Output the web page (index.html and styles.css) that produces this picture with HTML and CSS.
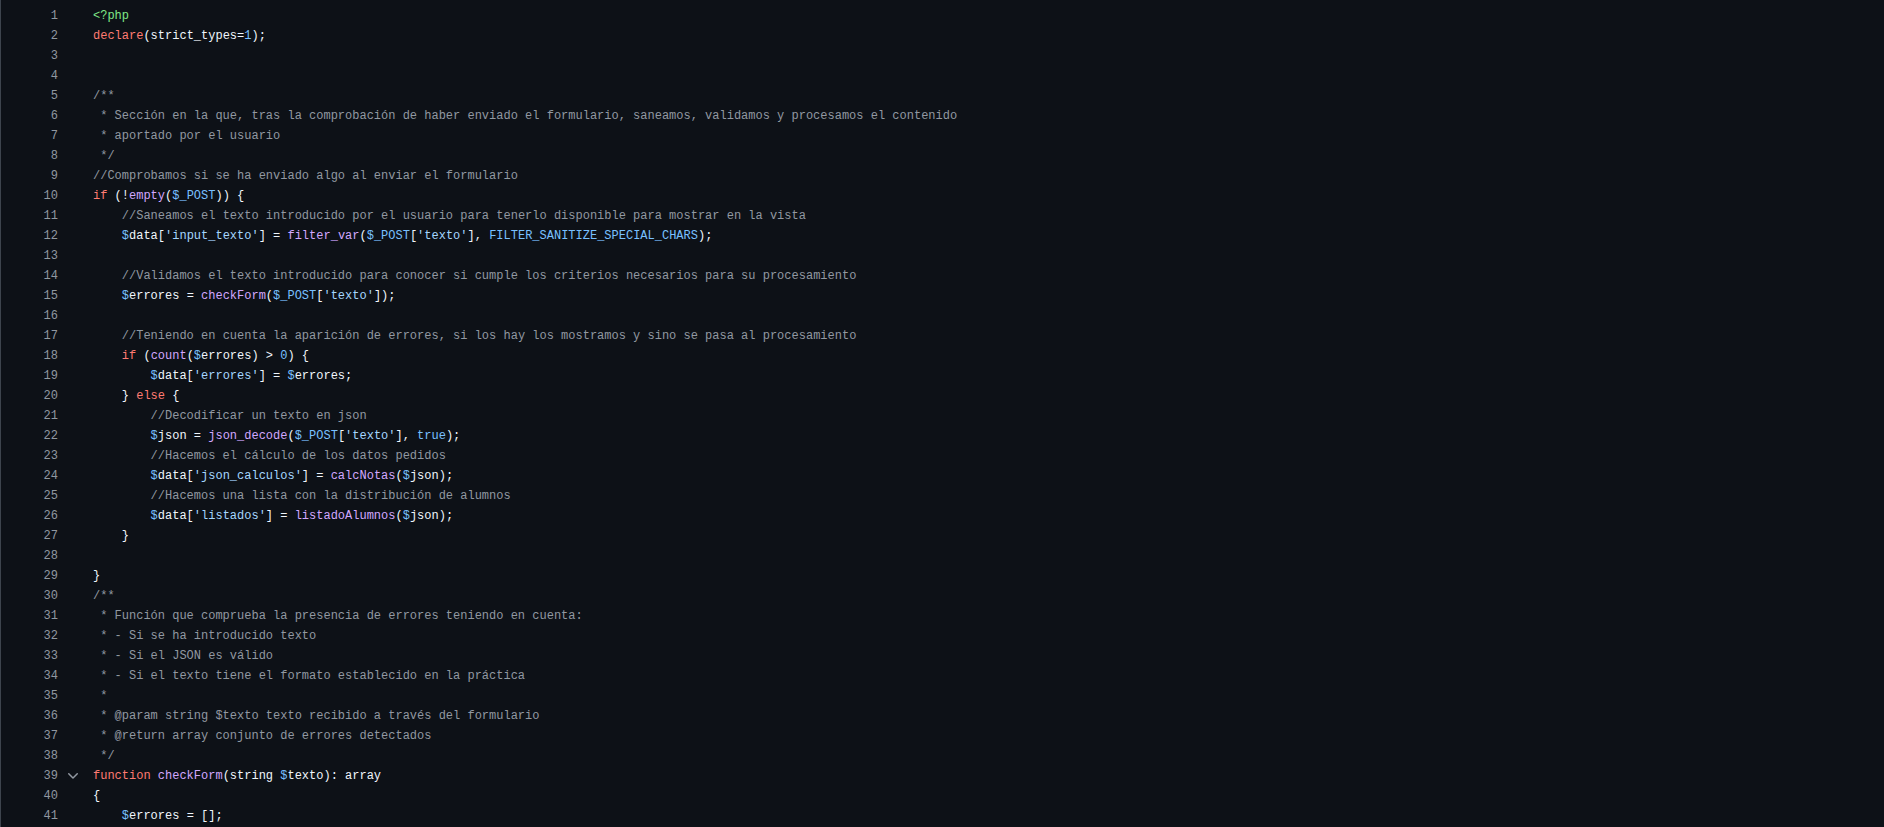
FILE: index.html
```html
<!DOCTYPE html>
<html lang="es">
<head>
  <meta charset="UTF-8" />
  <title>index.php</title>
  <link rel="stylesheet" href="styles.css">
</head>
<body>

  <!-- vista del fichero -->
  <div class="blob">
    <div class="line"><span class="num">1</span><span class="fold"></span><span class="code"><span class="t">&lt;?php</span></span></div>
    <div class="line"><span class="num">2</span><span class="fold"></span><span class="code"><span class="k">declare</span>(strict_types=<span class="v">1</span>);</span></div>
    <div class="line"><span class="num">3</span><span class="fold"></span><span class="code"></span></div>
    <div class="line"><span class="num">4</span><span class="fold"></span><span class="code"></span></div>
    <div class="line"><span class="num">5</span><span class="fold"></span><span class="code"><span class="c">/**</span></span></div>
    <div class="line"><span class="num">6</span><span class="fold"></span><span class="code"><span class="c"> * Sección en la que, tras la comprobación de haber enviado el formulario, saneamos, validamos y procesamos el contenido</span></span></div>
    <div class="line"><span class="num">7</span><span class="fold"></span><span class="code"><span class="c"> * aportado por el usuario</span></span></div>
    <div class="line"><span class="num">8</span><span class="fold"></span><span class="code"><span class="c"> */</span></span></div>
    <div class="line"><span class="num">9</span><span class="fold"></span><span class="code"><span class="c">//Comprobamos si se ha enviado algo al enviar el formulario</span></span></div>
    <div class="line"><span class="num">10</span><span class="fold"></span><span class="code"><span class="k">if</span> (!<span class="f">empty</span>(<span class="v">$_POST</span>)) {</span></div>
    <div class="line"><span class="num">11</span><span class="fold"></span><span class="code">    <span class="c">//Saneamos el texto introducido por el usuario para tenerlo disponible para mostrar en la vista</span></span></div>
    <div class="line"><span class="num">12</span><span class="fold"></span><span class="code">    <span class="v">$</span>data[<span class="s">'input_texto'</span>] = <span class="f">filter_var</span>(<span class="v">$_POST</span>[<span class="s">'texto'</span>], <span class="v">FILTER_SANITIZE_SPECIAL_CHARS</span>);</span></div>
    <div class="line"><span class="num">13</span><span class="fold"></span><span class="code"></span></div>
    <div class="line"><span class="num">14</span><span class="fold"></span><span class="code">    <span class="c">//Validamos el texto introducido para conocer si cumple los criterios necesarios para su procesamiento</span></span></div>
    <div class="line"><span class="num">15</span><span class="fold"></span><span class="code">    <span class="v">$</span>errores = <span class="f">checkForm</span>(<span class="v">$_POST</span>[<span class="s">'texto'</span>]);</span></div>
    <div class="line"><span class="num">16</span><span class="fold"></span><span class="code"></span></div>
    <div class="line"><span class="num">17</span><span class="fold"></span><span class="code">    <span class="c">//Teniendo en cuenta la aparición de errores, si los hay los mostramos y sino se pasa al procesamiento</span></span></div>
    <div class="line"><span class="num">18</span><span class="fold"></span><span class="code">    <span class="k">if</span> (<span class="f">count</span>(<span class="v">$</span>errores) &gt; <span class="v">0</span>) {</span></div>
    <div class="line"><span class="num">19</span><span class="fold"></span><span class="code">        <span class="v">$</span>data[<span class="s">'errores'</span>] = <span class="v">$</span>errores;</span></div>
    <div class="line"><span class="num">20</span><span class="fold"></span><span class="code">    } <span class="k">else</span> {</span></div>
    <div class="line"><span class="num">21</span><span class="fold"></span><span class="code">        <span class="c">//Decodificar un texto en json</span></span></div>
    <div class="line"><span class="num">22</span><span class="fold"></span><span class="code">        <span class="v">$</span>json = <span class="f">json_decode</span>(<span class="v">$_POST</span>[<span class="s">'texto'</span>], <span class="v">true</span>);</span></div>
    <div class="line"><span class="num">23</span><span class="fold"></span><span class="code">        <span class="c">//Hacemos el cálculo de los datos pedidos</span></span></div>
    <div class="line"><span class="num">24</span><span class="fold"></span><span class="code">        <span class="v">$</span>data[<span class="s">'json_calculos'</span>] = <span class="f">calcNotas</span>(<span class="v">$</span>json);</span></div>
    <div class="line"><span class="num">25</span><span class="fold"></span><span class="code">        <span class="c">//Hacemos una lista con la distribución de alumnos</span></span></div>
    <div class="line"><span class="num">26</span><span class="fold"></span><span class="code">        <span class="v">$</span>data[<span class="s">'listados'</span>] = <span class="f">listadoAlumnos</span>(<span class="v">$</span>json);</span></div>
    <div class="line"><span class="num">27</span><span class="fold"></span><span class="code">    }</span></div>
    <div class="line"><span class="num">28</span><span class="fold"></span><span class="code"></span></div>
    <div class="line"><span class="num">29</span><span class="fold"></span><span class="code">}</span></div>
    <div class="line"><span class="num">30</span><span class="fold"></span><span class="code"><span class="c">/**</span></span></div>
    <div class="line"><span class="num">31</span><span class="fold"></span><span class="code"><span class="c"> * Función que comprueba la presencia de errores teniendo en cuenta:</span></span></div>
    <div class="line"><span class="num">32</span><span class="fold"></span><span class="code"><span class="c"> * - Si se ha introducido texto</span></span></div>
    <div class="line"><span class="num">33</span><span class="fold"></span><span class="code"><span class="c"> * - Si el JSON es válido</span></span></div>
    <div class="line"><span class="num">34</span><span class="fold"></span><span class="code"><span class="c"> * - Si el texto tiene el formato establecido en la práctica</span></span></div>
    <div class="line"><span class="num">35</span><span class="fold"></span><span class="code"><span class="c"> *</span></span></div>
    <div class="line"><span class="num">36</span><span class="fold"></span><span class="code"><span class="c"> * @param string $texto texto recibido a través del formulario</span></span></div>
    <div class="line"><span class="num">37</span><span class="fold"></span><span class="code"><span class="c"> * @return array conjunto de errores detectados</span></span></div>
    <div class="line"><span class="num">38</span><span class="fold"></span><span class="code"><span class="c"> */</span></span></div>
    <div class="line"><span class="num">39</span><span class="fold"><svg class="chevron" viewBox="0 0 16 16" width="16" height="16"><path d="M12.78 5.22a.749.749 0 0 1 0 1.06l-4.25 4.25a.749.749 0 0 1-1.06 0L3.22 6.28a.749.749 0 1 1 1.06-1.06L8 8.939l3.72-3.719a.749.749 0 0 1 1.06 0Z"/></svg></span><span class="code"><span class="k">function</span> <span class="f">checkForm</span>(string <span class="v">$</span>texto): array</span></div>
    <div class="line"><span class="num">40</span><span class="fold"></span><span class="code">{</span></div>
    <div class="line"><span class="num">41</span><span class="fold"></span><span class="code">    <span class="v">$</span>errores = [];</span></div>
  </div>

</body>
</html>
```

FILE: styles.css
```css
/* reset sencillo */
* {
  margin: 0;
  padding: 0;
  box-sizing: border-box;
}
body {
  background: #0d1117;
  color: #f0f6fc;
  font-family: "Liberation Mono", "DejaVu Sans Mono", monospace;
  font-size: 12px;
  height: 100vh;
  overflow: hidden;
}

/* bloque de código */
.blob {
  border-left: 1px solid #3d444d;
  padding-top: 6px;
  min-height: 100vh;
}
.line {
  display: flex;
  height: 20px;
  line-height: 20px;
}
.num {
  width: 57px;
  flex-shrink: 0;
  text-align: right;
  color: #9198a1;
}
.fold {
  width: 35px;
  flex-shrink: 0;
  display: flex;
  align-items: center;
  padding-left: 7px;
}
.chevron {
  fill: #9198a1;
}
.code {
  white-space: pre;
}

/* colores de sintaxis */
.c { color: #9198a1; }
.k { color: #ff7b72; }
.f { color: #d2a8ff; }
.s { color: #a5d6ff; }
.v { color: #79c0ff; }
.t { color: #7ee787; }
```
